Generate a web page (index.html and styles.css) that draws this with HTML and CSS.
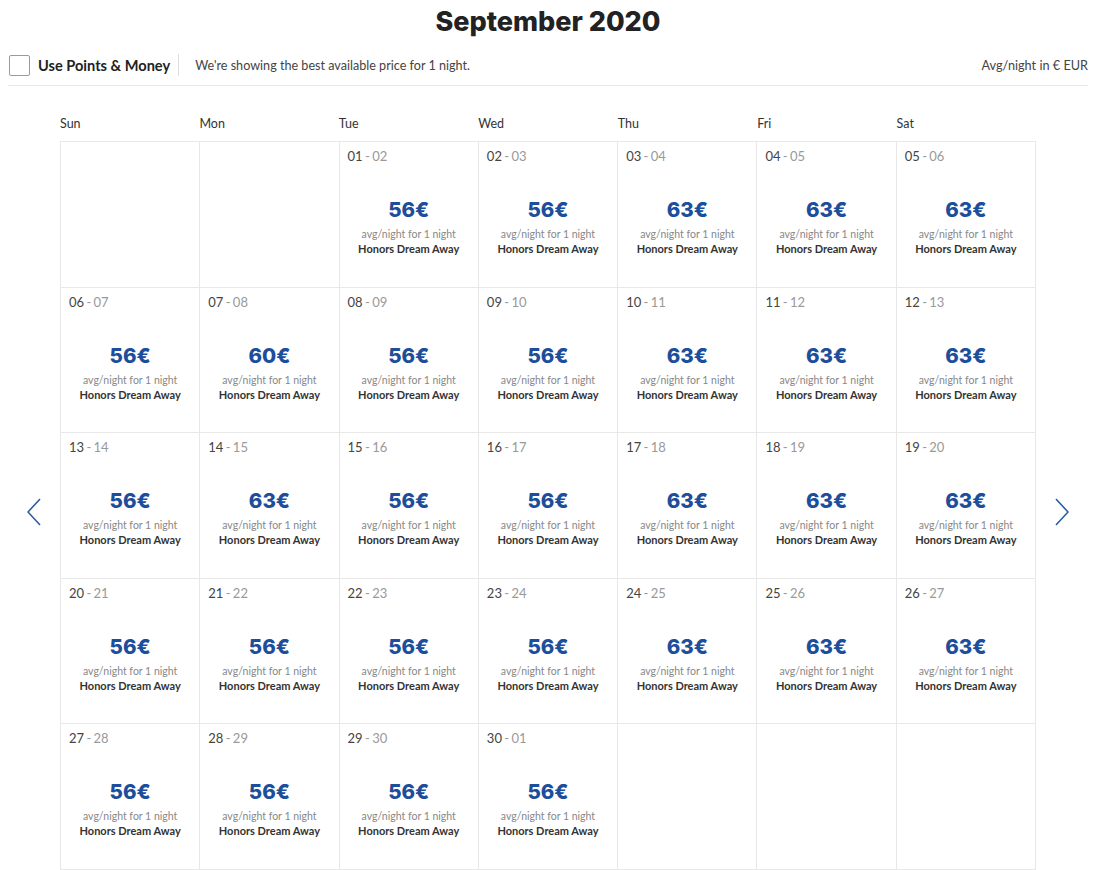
FILE: index.html
```html
<!DOCTYPE html>
<html lang="en">
<head>
<meta charset="utf-8">
<title>September 2020</title>
<link rel="stylesheet" href="styles.css">
</head>
<body>
<div class="page">
  <h1 class="title">September 2020</h1>
  <div class="toolbar">
    <label class="points">
      <span class="checkbox"></span>
      <span class="points-label">Use Points &amp; Money</span>
    </label>
    <span class="divider"></span>
    <span class="note">We're showing the best available price for 1 night.</span>
    <span class="currency">Avg/night in € EUR</span>
  </div>
  <div class="calendar">
    <div class="nav">
      <svg class="arrow" width="14" height="28" viewBox="0 0 14 28"><path d="M13 1 L1 14 L13 27" fill="none" stroke="#2b5d9f" stroke-width="1.6"/></svg>
    </div>
    <div class="month">
      <div class="weekdays">
        <span>Sun</span><span>Mon</span><span>Tue</span><span>Wed</span><span>Thu</span><span>Fri</span><span>Sat</span>
      </div>
      <div class="grid">
        <div class="cell empty"></div>
        <div class="cell empty"></div>
        <div class="cell"><div class="date">01 <span>- 02</span></div><div class="price">56€</div><div class="sub">avg/night for 1 night</div><div class="rate">Honors Dream Away</div></div>
        <div class="cell"><div class="date">02 <span>- 03</span></div><div class="price">56€</div><div class="sub">avg/night for 1 night</div><div class="rate">Honors Dream Away</div></div>
        <div class="cell"><div class="date">03 <span>- 04</span></div><div class="price">63€</div><div class="sub">avg/night for 1 night</div><div class="rate">Honors Dream Away</div></div>
        <div class="cell"><div class="date">04 <span>- 05</span></div><div class="price">63€</div><div class="sub">avg/night for 1 night</div><div class="rate">Honors Dream Away</div></div>
        <div class="cell"><div class="date">05 <span>- 06</span></div><div class="price">63€</div><div class="sub">avg/night for 1 night</div><div class="rate">Honors Dream Away</div></div>

        <div class="cell"><div class="date">06 <span>- 07</span></div><div class="price">56€</div><div class="sub">avg/night for 1 night</div><div class="rate">Honors Dream Away</div></div>
        <div class="cell"><div class="date">07 <span>- 08</span></div><div class="price">60€</div><div class="sub">avg/night for 1 night</div><div class="rate">Honors Dream Away</div></div>
        <div class="cell"><div class="date">08 <span>- 09</span></div><div class="price">56€</div><div class="sub">avg/night for 1 night</div><div class="rate">Honors Dream Away</div></div>
        <div class="cell"><div class="date">09 <span>- 10</span></div><div class="price">56€</div><div class="sub">avg/night for 1 night</div><div class="rate">Honors Dream Away</div></div>
        <div class="cell"><div class="date">10 <span>- 11</span></div><div class="price">63€</div><div class="sub">avg/night for 1 night</div><div class="rate">Honors Dream Away</div></div>
        <div class="cell"><div class="date">11 <span>- 12</span></div><div class="price">63€</div><div class="sub">avg/night for 1 night</div><div class="rate">Honors Dream Away</div></div>
        <div class="cell"><div class="date">12 <span>- 13</span></div><div class="price">63€</div><div class="sub">avg/night for 1 night</div><div class="rate">Honors Dream Away</div></div>

        <div class="cell"><div class="date">13 <span>- 14</span></div><div class="price">56€</div><div class="sub">avg/night for 1 night</div><div class="rate">Honors Dream Away</div></div>
        <div class="cell"><div class="date">14 <span>- 15</span></div><div class="price">63€</div><div class="sub">avg/night for 1 night</div><div class="rate">Honors Dream Away</div></div>
        <div class="cell"><div class="date">15 <span>- 16</span></div><div class="price">56€</div><div class="sub">avg/night for 1 night</div><div class="rate">Honors Dream Away</div></div>
        <div class="cell"><div class="date">16 <span>- 17</span></div><div class="price">56€</div><div class="sub">avg/night for 1 night</div><div class="rate">Honors Dream Away</div></div>
        <div class="cell"><div class="date">17 <span>- 18</span></div><div class="price">63€</div><div class="sub">avg/night for 1 night</div><div class="rate">Honors Dream Away</div></div>
        <div class="cell"><div class="date">18 <span>- 19</span></div><div class="price">63€</div><div class="sub">avg/night for 1 night</div><div class="rate">Honors Dream Away</div></div>
        <div class="cell"><div class="date">19 <span>- 20</span></div><div class="price">63€</div><div class="sub">avg/night for 1 night</div><div class="rate">Honors Dream Away</div></div>

        <div class="cell"><div class="date">20 <span>- 21</span></div><div class="price">56€</div><div class="sub">avg/night for 1 night</div><div class="rate">Honors Dream Away</div></div>
        <div class="cell"><div class="date">21 <span>- 22</span></div><div class="price">56€</div><div class="sub">avg/night for 1 night</div><div class="rate">Honors Dream Away</div></div>
        <div class="cell"><div class="date">22 <span>- 23</span></div><div class="price">56€</div><div class="sub">avg/night for 1 night</div><div class="rate">Honors Dream Away</div></div>
        <div class="cell"><div class="date">23 <span>- 24</span></div><div class="price">56€</div><div class="sub">avg/night for 1 night</div><div class="rate">Honors Dream Away</div></div>
        <div class="cell"><div class="date">24 <span>- 25</span></div><div class="price">63€</div><div class="sub">avg/night for 1 night</div><div class="rate">Honors Dream Away</div></div>
        <div class="cell"><div class="date">25 <span>- 26</span></div><div class="price">63€</div><div class="sub">avg/night for 1 night</div><div class="rate">Honors Dream Away</div></div>
        <div class="cell"><div class="date">26 <span>- 27</span></div><div class="price">63€</div><div class="sub">avg/night for 1 night</div><div class="rate">Honors Dream Away</div></div>

        <div class="cell"><div class="date">27 <span>- 28</span></div><div class="price">56€</div><div class="sub">avg/night for 1 night</div><div class="rate">Honors Dream Away</div></div>
        <div class="cell"><div class="date">28 <span>- 29</span></div><div class="price">56€</div><div class="sub">avg/night for 1 night</div><div class="rate">Honors Dream Away</div></div>
        <div class="cell"><div class="date">29 <span>- 30</span></div><div class="price">56€</div><div class="sub">avg/night for 1 night</div><div class="rate">Honors Dream Away</div></div>
        <div class="cell"><div class="date">30 <span>- 01</span></div><div class="price">56€</div><div class="sub">avg/night for 1 night</div><div class="rate">Honors Dream Away</div></div>
        <div class="cell empty"></div>
        <div class="cell empty"></div>
        <div class="cell empty"></div>
      </div>
    </div>
    <div class="nav">
      <svg class="arrow" width="14" height="28" viewBox="0 0 14 28"><path d="M1 1 L13 14 L1 27" fill="none" stroke="#2b5d9f" stroke-width="1.6"/></svg>
    </div>
  </div>
</div>
</body>
</html>
```

FILE: styles.css
```css
* { box-sizing: border-box; }
html, body { margin: 0; padding: 0; background: #fff; }
body {
  font-family: Lato, "Open Sans", Arial, sans-serif;
  color: #333;
}
.page {
  width: 1100px;
  padding: 0 12px 0 8px;
}
.title {
  margin: 0;
  padding-top: 5px;
  height: 39px;
  line-height: 34px;
  text-align: center;
  font-family: Inter, Lato, sans-serif;
  font-weight: 800;
  font-size: 27px;
  color: #222;
}
.toolbar {
  margin-top: 6px;
  height: 41px;
  display: flex;
  align-items: center;
  padding-left: 1px;
  border-bottom: 1px solid #e8e8e8;
}
.points {
  display: flex;
  align-items: center;
}
.checkbox {
  width: 21px;
  height: 21px;
  border: 1px solid #9a9a9a;
  border-radius: 2px;
  background: #fff;
}
.points-label {
  margin-left: 8px;
  font-weight: 700;
  font-size: 14.6px;
  color: #222;
}
.divider {
  width: 1px;
  height: 22px;
  background: #ddd;
  margin: 0 16px 0 8px;
}
.note {
  font-size: 12.6px;
  color: #444;
}
.currency {
  margin-left: auto;
  font-size: 12.7px;
  color: #444;
}
.calendar {
  display: flex;
}
.nav {
  width: 52px;
  display: flex;
  align-items: center;
  justify-content: center;
  padding-top: 68px;
}
.month {
  width: 976px;
}
.weekdays {
  display: grid;
  grid-template-columns: repeat(7, 1fr);
  padding-top: 30px;
  height: 55px;
  font-size: 12.5px;
  line-height: 15px;
  color: #333;
}
.grid {
  display: grid;
  grid-template-columns: repeat(7, 1fr);
  grid-auto-rows: 145.6px;
  border-top: 1px solid #e8e8e8;
  border-left: 1px solid #e8e8e8;
}
.cell {
  border-right: 1px solid #e8e8e8;
  border-bottom: 1px solid #e8e8e8;
  padding: 6px 8px 0 8px;
  display: flex;
  flex-direction: column;
  align-items: center;
}
.date {
  align-self: flex-start;
  font-size: 13px;
  line-height: 16px;
  color: #444;
  word-spacing: -1px;
}
.date span { color: #999; }
.price {
  margin-top: 34px;
  font-family: Inter, Lato, sans-serif;
  font-weight: 800;
  font-size: 20.5px;
  line-height: 24px;
  color: #1c4e9b;
}
.sub {
  margin-top: 5px;
  font-size: 10.5px;
  line-height: 14px;
  color: #888;
}
.rate {
  margin-top: 1px;
  font-size: 11px;
  line-height: 14px;
  font-weight: 700;
  color: #333;
}
```
